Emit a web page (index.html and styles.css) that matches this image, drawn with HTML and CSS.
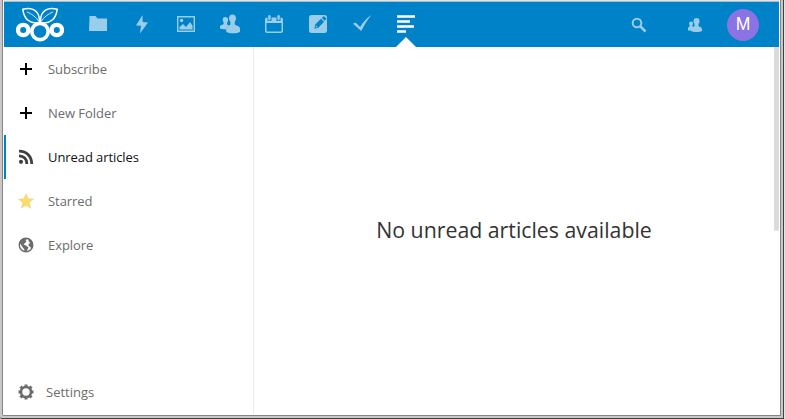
FILE: index.html
```
<!DOCTYPE html>
<html lang="en">
<head>
<meta charset="utf-8">
<title>News</title>
<link rel="stylesheet" href="styles.css">
</head>
<body>
<div class="frame"><div class="frame-inner"><div class="window">
<header class="header">
  <a class="logo"><svg class="mark" width="48" height="36" viewBox="0 0 48 36">
    <path stroke-width="1.500" d="M23.500 15.500C14 17.500 8 12 6.800 2.300C15 .3 24 2 23.500 15.500ZM24.500 15.500C34 17.500 40 12 41.200 2.300C33 .3 24 2 24.500 15.500Z"/>
    <path stroke-width=".8" d="M23 14.500C20 10 16 7 11 5M25 14.500C28 10 32 7 37 5"/>
    <circle cx="24" cy="24.500" r="8.200" stroke-width="3.700"/><circle cx="7.200" cy="23" r="5.200" stroke-width="4.300"/><circle cx="40.800" cy="23" r="5.200" stroke-width="4.300"/>
  </svg></a>
  <nav class="apps">
    <a class="app"><svg width="20" height="20" viewBox="0 0 20 20"><path d="M1.500 2h6l2 2.500h9.500v12.500H1z"/></svg></a>
    <a class="app"><svg width="20" height="20" viewBox="0 0 20 20"><path d="M10.500 1L4 11.500l5 .3L8 19.500l8-11-5.300-.5z"/></svg></a>
    <a class="app"><svg width="20" height="20" viewBox="0 0 20 20"><path fill-rule="evenodd" d="M1 2h18v16H1zM2.400 3.400v13.200h15.200V3.400zM3.500 15.500v-2.500l3.500-3 3 3 4-5 2.500 3.500v4z"/><circle cx="5.600" cy="6.500" r="1.700"/></svg></a>
    <a class="app"><svg width="20" height="20" viewBox="0 0 20 20"><path d="M12.500.5c2.300 0 3.500 1.500 3.500 3.800 0 1.500-.5 2.700-1.200 3.500v2.600c1.500 1.300 5.200 1.300 5.200 4.300v3c-3 2.200-11 2.200-13.800 0v-3c0-2.500 3-3 4.200-4.300V7.700C9.500 7 9 5.800 9 4.300 9 2 10.200.5 12.500.5z"/><path d="M5.300 3c1.700 0 2.800 1.100 2.800 2.800 0 1.100-.4 2-.9 2.600v2l1.800 1c-1.500 1-2.800 2-2.800 4C2.500 15.300.6 15 0 14.500v-2c0-1.500 2.700-1.400 3.600-2.500V8.300C3 7.700 2.600 6.900 2.600 5.800 2.600 4.100 3.600 3 5.300 3z"/></svg></a>
    <a class="app"><svg width="20" height="20" viewBox="0 0 20 20"><path fill-rule="evenodd" d="M3 3.500h.5V6.800h4V3.500h5v3.300h4V3.500h.5c1.300 0 2 .7 2 2V17c0 1.300-.7 2-2 2H3c-1.300 0-2-.7-2-2V5.500c0-1.300.7-2 2-2zM2.500 9v7.500c0 .7.300 1 1 1h13c.7 0 1-.3 1-1V9z"/><rect x="4.200" y="1" width="2.400" height="5" rx="1.200"/><rect x="13.400" y="1" width="2.400" height="5" rx="1.200"/></svg></a>
    <a class="app"><svg width="20" height="20" viewBox="0 0 20 20"><rect x="1" y="1" width="18" height="18" rx="2.500"/><path class="cut" d="M6.500 14.700l.8-4.300L13 4.800l3 3-5.700 6z"/><path class="cut" d="M13.900 3.900L15.800 2 18.500 4.700l-1.700 2z"/><path d="M7.700 13.400l.5-2 1.500 1.500z"/></svg></a>
    <a class="app"><svg width="20" height="20" viewBox="0 0 20 20"><path d="M1 9.700l2.500-1.200 4.600 4.600C10.800 8.500 14 4.500 19.300 1 15.500 6 12 11.500 9.200 17z"/></svg></a>
    <a class="app active"><svg width="20" height="20" viewBox="0 0 20 20"><path d="M1 1.200h18v2.600H1zM1 6.200h13v2.600H1zM1 11.200h17v2.600H1zM1 16.200h9v2.600H1z"/></svg></a>
  </nav>
  <a class="tool search"><svg width="16" height="16" viewBox="0 0 16 16"><circle class="line" cx="6" cy="6" r="4.300" stroke-width="2"/><path d="M9 9l5.500 5.500" stroke="currentColor" stroke-width="2.500"/></svg></a>
  <a class="tool"><svg width="16" height="16" viewBox="0 0 16 16"><path d="M9.500 1c2 0 3 1.300 3 3 0 1.300-.4 2.200-1 2.900V9c1.300 1 3.500 1.200 3.500 3.300V14c-2.500 1.400-8.500 1.400-11 0v-1.700C4 10.200 6.500 10 7.500 9V6.900C7 6.200 6.500 5.300 6.500 4c0-1.700 1-3 3-3z"/><path d="M4 4.500c1.300 0 2 .8 2 2 0 .9-.2 1.500-.6 2v1l1.600.8c-1.500.7-3 1.400-3 3.200H1v-1.900C1 10 2.200 10 2.700 9.300v-.9c-.4-.4-.6-1-.6-1.900 0-1.200.7-2 1.900-2z"/></svg></a>
  <a class="avatar">M</a>
</header>
<div class="body">
  <aside class="sidebar">
    <ul class="menu">
      <li class="item"><svg class="black" width="16" height="16" viewBox="0 0 16 16"><path d="M7 2h2v5h5v2H9v5H7V9H2V7h5z"/></svg><span>Subscribe</span></li>
      <li class="item"><svg class="black" width="16" height="16" viewBox="0 0 16 16"><path d="M7 2h2v5h5v2H9v5H7V9H2V7h5z"/></svg><span>New Folder</span></li>
      <li class="item selected"><svg class="feed" width="16" height="16" viewBox="0 0 16 16"><circle cx="3" cy="12.800" r="2.100"/><path class="line" stroke-width="2.800" d="M1 6.900c4.800 0 7.900 3.200 7.900 8M1 2.200c7.700 0 12.700 5 12.700 12.700"/></svg><span>Unread articles</span></li>
      <li class="item"><svg class="star" width="16" height="16" viewBox="0 0 16 16"><path d="M8 .6l2.200 5.200 5.300.3-4.200 3.700 1.500 5.400L8 12.300l-4.800 2.900 1.500-5.400L.5 6.100l5.300-.3z"/></svg><span>Starred</span></li>
      <li class="item"><svg width="16" height="16" viewBox="0 0 16 16"><circle class="line" cx="8" cy="8" r="6.800" stroke-width="1.400"/><path d="M1 7C1.500 3.500 4 1.200 7.500 1L9 2 7.500 3.500l1 1L7 6 5.500 7.500 8 8.500l2.500 2-1 2-1.500 2.500-1.500-.5-.3-2.500L4 9.500 3 7.500zM10 1.500c3 .8 5 3.500 5 6.500 0 1.700-.6 3.300-1.800 4.600l-.7-2.600-1.700-1L10.500 7l1.700-1-1.400-1.500z"/></svg><span>Explore</span></li>
    </ul>
    <div class="settings"><svg width="16" height="16" viewBox="0 0 16 16"><circle class="line" cx="8" cy="8" r="5" stroke-width="2.600"/><path class="line" stroke-width="3" d="M8 .5v2.500M8 13v2.500M.5 8H3M13 8h2.500M2.500 2.500l1.700 1.700M11.800 11.800l1.700 1.700M2.500 13.500l1.700-1.700M11.800 4.200l1.700-1.700"/></svg><span>Settings</span></div>
  </aside>
  <main class="content"><h2>No unread articles available</h2></main>
  <div class="scroll"><div class="thumb"></div></div>
</div>
</div></div></div>
</body>
</html>
```
FILE: styles.css
```
* { box-sizing: border-box; }
body { margin: 0; height: 419px; overflow: hidden; font-family: "Open Sans", "Noto Sans", sans-serif; font-size: 13px; color: #6c6c6c; background: #e4e4e4; }
.frame { width: 784px; height: 419px; background: #c8c8c8; border-right: 1px solid #404040; border-bottom: 1px solid #404040; border-bottom-left-radius: 2px; padding: 0 2px 2px; }
.frame-inner { height: 416px; background: #fff; border: 1px solid #858585; border-top: 0; border-bottom-left-radius: 2px; padding: 0 1px; }
.window { height: 414px; display: flex; flex-direction: column; border-top: 1px solid #e4e4e4; width: 775px; }
.header { height: 46px; flex: none; border-top: 1px solid #a9bdc8; background: #0082c9; display: flex; align-items: center; color: #fff; padding: 0 20px 0 12px; }
.logo { width: 48px; height: 36px; }
.logo svg, .app svg, .tool svg { display: block; }
svg { fill: currentColor; flex: none; }
.mark { fill: none; stroke: #fff; }
.line { fill: none; stroke: currentColor; }
.apps { display: flex; align-self: stretch; margin-left: 12px; flex: 1; }
.app { width: 44px; position: relative; display: flex; align-items: center; justify-content: center; color: #99cde9; padding-bottom: 1px; }
.app.active { color: #fff; }
.app.active::after { content: ""; position: absolute; bottom: 0; left: 12px; border: 10px solid transparent; border-top: 0; border-bottom-color: #fff; }
.cut { fill: #0082c9; }
.tool { color: #99cde9; }
.search { margin-right: 40px; }
.avatar { margin-left: 24px; width: 32px; height: 32px; border-radius: 50%; background: #8c73e3; display: flex; align-items: center; justify-content: center; font: 17.600px "Liberation Sans", sans-serif; color: #fff; }
.body { flex: 1; display: flex; min-height: 0; background: #fff; }
.sidebar { width: 250px; flex: none; border-right: 1px solid #ebebeb; display: flex; flex-direction: column; justify-content: space-between; }
.menu { list-style: none; margin: 0; padding: 0; }
.item { height: 44px; display: flex; align-items: center; gap: 14px; padding-left: 14px; letter-spacing: -.05px; }
.item.selected { color: #111; border-left: 2px solid #0082c9; padding-left: 12px; letter-spacing: -.08px; }
.black { color: #000; }
.feed { color: #404040; }
.star { color: #ffdc60; stroke: #d8d0ac; stroke-width: .5; }
.settings { height: 44px; display: flex; align-items: center; gap: 12px; padding-left: 14px; }
.content { flex: 1; display: flex; align-items: center; justify-content: center; padding-bottom: 2px; }
.content h2 { margin: 0; font-size: 21.3px; font-weight: 400; color: #333; line-height: 30px; }
.scroll { width: 5px; flex: none; }
.thumb { height: 184px; background: #dbdbdb; border-radius: 0 0 2px 2px; }
```
